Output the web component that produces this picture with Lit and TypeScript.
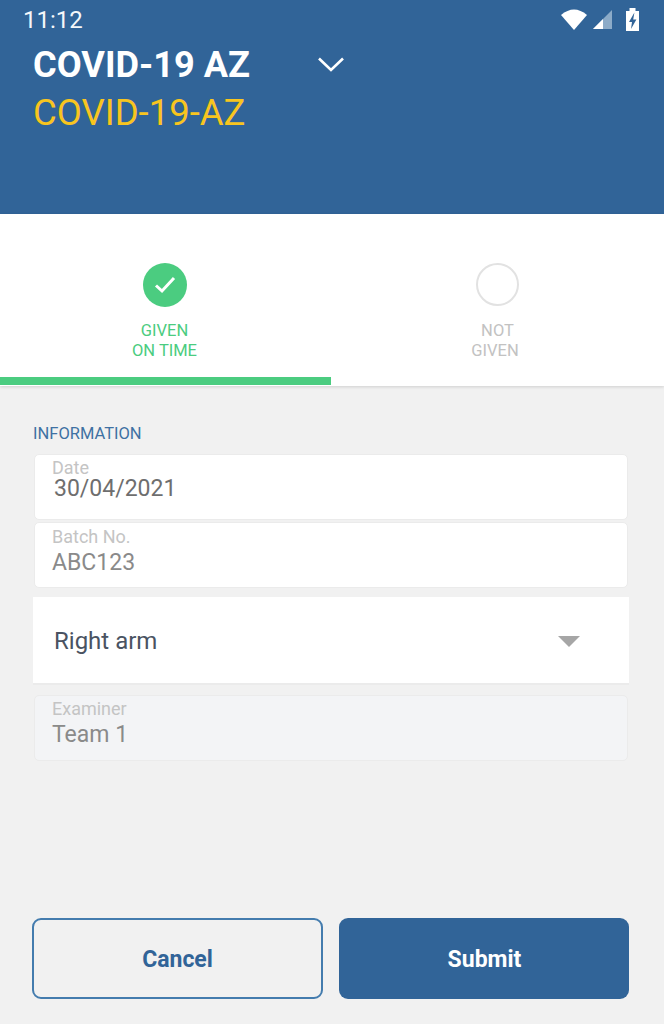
import { LitElement, html, css } from "lit";
import { customElement } from "lit/decorators.js";

@customElement("app-root")
export class AppRoot extends LitElement {
  static styles = css`
    :host { display: block; width: 664px; height: 1024px; background: #f1f1f1; font-family: Roboto, "Noto Sans", sans-serif; overflow: hidden; }
    .screen { display: flex; flex-direction: column; height: 1024px; }
    .header { height: 214px; box-sizing: border-box; background: #316498; flex: none; }
    .status { height: 38px; box-sizing: border-box; padding: 8px 20px 0 23px; display: flex; justify-content: space-between; align-items: flex-start; color: #f4f7fa; font-size: 24px; line-height: 25px; }
    .status-icons { display: flex; align-items: flex-start; margin-top: -1px; }
    .status-icons svg { display: block; }
    .title-row { display: flex; padding: 9px 0 0 33px; align-items: center; height: 35px; }
    .title { font-size: 36.2px; font-weight: 700; color: #fff; line-height: 35px; width: 284px; }
    .subtitle { font-size: 36.5px; color: #f8c51f; line-height: 40px; padding: 11px 0 0 33px; }
    .tabs { position: relative; z-index: 1; height: 172px; flex: none; box-sizing: border-box; background: #fff; display: flex; box-shadow: 0 1px 3px rgba(0,0,0,.14); }
    .tab { width: 333px; height: 171px; box-sizing: border-box; padding-top: 49px; display: flex; flex-direction: column; align-items: center; color: #c2c2c2; font-size: 16.5px; line-height: 20px; text-align: center; border-bottom: 8px solid transparent; }
    .tab.on { width: 331px; padding-right: 2px; color: #4bcc80; border-bottom-color: #4bcc80; }
    .circle { width: 43px; height: 43px; box-sizing: border-box; border-radius: 50%; border: 2px solid #e2e2e2; margin-bottom: 15px; }
    .circle.on { width: 44px; height: 44px; margin-bottom: 14px; border: 0; background: #4bcc80; display: flex; align-items: center; justify-content: center; }
    .second { padding-right: 5px; }
    .form { flex: 1; display: flex; flex-direction: column; padding: 0 36px 0 34px; }
    .section { color: #3f71a3; font-size: 16.5px; line-height: 18px; margin: 39px 0 11px -1px; }
    .card { height: 66px; box-sizing: border-box; background: #fff; border: 1px solid #ebebeb; border-radius: 5px; padding: 5px 0 0 17px; margin-bottom: 2px; color: #8a8a8a; flex: none; }
    .card .label { font-size: 18px; line-height: 16px; color: #c4c4c4; }
    .card .value { font-size: 23px; line-height: 26px; margin-top: 5px; }
    .card.date .value { color: #6e6e6e; margin: 1px 0 0 2px; line-height: 24px; }
    .card.batch { padding-top: 6px; }
    .card.off { background: #f3f4f6; margin-top: 10px; }
    .select { height: 88px; box-sizing: border-box; margin: 7px -1px 0 -1px; background: #fff; border-bottom: 2px solid #ebebeb; display: flex; align-items: center; justify-content: space-between; padding: 2px 49px 0 21px; color: #4a5362; font-size: 24px; flex: none; }
    .tri { width: 22px; height: 11px; display: block; }
    .actions { display: flex; justify-content: space-between; padding: 0 35px 25px 32px; flex: none; }
    .btn { width: 291px; height: 81px; box-sizing: border-box; border-radius: 9px; border: 2px solid #447cae; color: #316498; font-size: 23px; font-weight: 700; display: flex; align-items: center; justify-content: center; padding-top: 1px; }
    .btn.primary { background: #316498; border: 0; color: #fff; width: 290px; padding: 1px 0 0 1px; }
  `;

  render() {
    return html`<div class="screen">
      <div class="header">
        <div class="status">
          <span>11:12</span>
          <div class="status-icons">
            <svg width="84" height="28" viewBox="0 0 84 28">
              <path d="M1 8 Q14 -3 27 8 L14 23 Z" fill="#fff"/>
              <path d="M33 22 L52 3 L52 22 Z" fill="#8cabc8"/>
              <path d="M33 22 L43 12 L43 22 Z" fill="#fff"/>
              <path d="M66 4 L69.5 4 L69.5 1 L75.5 1 L75.5 4 L79 4 L79 24 L66 24 Z" fill="#fff"/>
              <path d="M74.4 5.5 L69 15 L72 15 L71 22 L76.4 12.4 L73.2 12.4 Z" fill="#316498"/>
            </svg>
          </div>
        </div>
        <div class="title-row">
          <div class="title">COVID-19 AZ</div>
          <svg width="28" height="17" viewBox="0 0 28 17"><path d="M2 2.5 L14 14 L26 2.5" fill="none" stroke="#fff" stroke-width="2.6"/></svg>
        </div>
        <div class="subtitle">COVID-19-AZ</div>
      </div>
      <div class="tabs">
        <div class="tab on">
          <div class="circle on">
            <svg width="24" height="20" viewBox="0 0 24 20"><path d="M3 10.5 L9 16 L21 3" fill="none" stroke="#fff" stroke-width="3"/></svg>
          </div>
          <span>GIVEN<br />ON TIME</span>
        </div>
        <div class="tab">
          <div class="circle"></div>
          <span>NOT<br /><span class="second">GIVEN</span></span>
        </div>
      </div>
      <div class="form">
        <div class="section">INFORMATION</div>
        <div class="card date">
          <div class="label">Date</div>
          <div class="value">30/04/2021</div>
        </div>
        <div class="card batch">
          <div class="label">Batch No.</div>
          <div class="value">ABC123</div>
        </div>
        <div class="select">
          <span>Right arm</span>
          <svg class="tri" viewBox="0 0 22 11"><path d="M0 0 H22 L11 11 Z" fill="#a6a6a6"/></svg>
        </div>
        <div class="card off">
          <div class="label">Examiner</div>
          <div class="value">Team 1</div>
        </div>
      </div>
      <div class="actions">
        <div class="btn">Cancel</div>
        <div class="btn primary">Submit</div>
      </div>
    </div>`;
  }
}
